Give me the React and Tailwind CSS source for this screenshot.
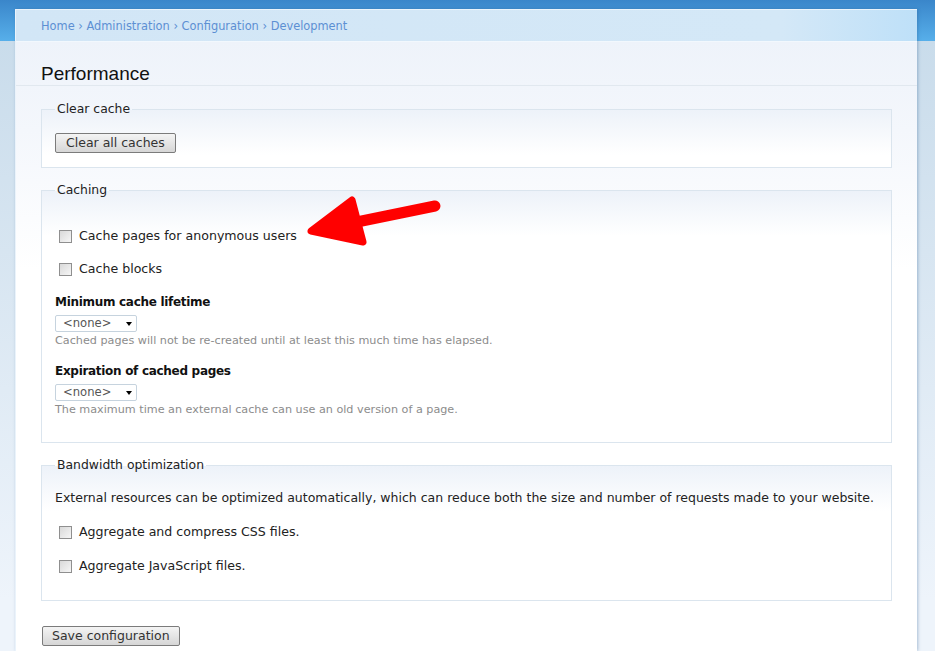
import React from 'react';

const font = { fontFamily: '"DejaVu Sans", Verdana, sans-serif' };

const Checkbox = ({ label }) => (
  <label className="flex items-center h-[16px] text-[12.6px] text-[#222] pl-[4px]">
    <span className="w-[13px] h-[13px] border border-[#8f8f8f] bg-[linear-gradient(135deg,#d9d9d9,#f6f6f6)] mr-[7px] shrink-0" />
    {label}
  </label>
);

const Select = () => (
  <div className="w-[82px] h-[17px] border border-[#c6d3de] bg-white flex items-center justify-between pl-[7px] pr-[4px] text-[11.6px] text-[#555] rounded-[2px]">
    <span>&lt;none&gt;</span>
    <span className="w-0 h-0 border-l-[3.5px] border-r-[3.5px] border-t-[4px] border-l-transparent border-r-transparent border-t-black mt-[1px]" />
  </div>
);

const Fieldset = ({ title, className, children }) => (
  <fieldset className={`border border-[#dbe5ee] bg-[linear-gradient(#edf2f9,#ffffff_45px)] px-[13px] ${className}`}>
    <legend className="px-[2px] text-[12.4px] leading-[16px] text-[#222]">{title}</legend>
    {children}
  </fieldset>
);

const Button = ({ children, className }) => (
  <button className={`h-[20px] border border-[#7b7b7b] rounded-[2px] bg-[linear-gradient(#f4f4f4,#d6d6d6)] text-[12.5px] text-[#333] leading-[16px] ${className}`}>
    {children}
  </button>
);

export default function App() {
  return (
    <div
      className="relative w-[935px] h-[651px] overflow-hidden bg-[linear-gradient(#3a86ca_0px,#57afea_41px,#c9dceb_41px,#eef4fb_600px)]"
      style={font}
    >
      <div className="ml-[15px] mr-[18px] mt-[9px] h-[642px] border-l border-t border-[#eaf3fb] shadow-[1px_0_3px_rgba(40,90,140,0.35)] bg-[linear-gradient(#eef3fa_32px,#f4f7fc_120px,#ffffff_260px)]">
        <div className="h-[32px] bg-[linear-gradient(90deg,#d2e6f6,#d4e8f7_85%,#bee0f8)] border-b border-[#f2f8fd] flex items-center pl-[25px] pt-[2px] text-[11.4px] text-[#5c8fd3]">
          Home › Administration › Configuration › Development
        </div>
        <div className="h-[44px] border-b border-[#e1e8ef] flex items-end pl-[25px]">
          <h1 className="text-[19px] text-[#111] leading-[24px] translate-y-[1px]" style={{ fontFamily: '"Liberation Sans", Arial, sans-serif' }}>Performance</h1>
        </div>
        <div className="pl-[25px] pr-[25px]">
          <Fieldset title="Clear cache" className="mt-[15px] pb-[13px]">
            <Button className="mt-[16px] px-[10px]">Clear all caches</Button>
          </Fieldset>

          <Fieldset title="Caching" className="mt-[14px] pb-[25px]">
            <div className="flex flex-col">
              <div className="mt-[30px]"><Checkbox label="Cache pages for anonymous users" /></div>
              <div className="mt-[17px]"><Checkbox label="Cache blocks" /></div>
              <div className="mt-[17px] h-[16px] leading-[16px] text-[12px] tracking-[-0.3px] font-bold text-[#111]">Minimum cache lifetime</div>
              <div className="mt-[5px]"><Select /></div>
              <div className="mt-[2px] h-[14px] leading-[14px] text-[11.2px] text-[#8c8c8c]">Cached pages will not be re-created until at least this much time has elapsed.</div>
              <div className="mt-[15px] h-[16px] leading-[16px] text-[12px] tracking-[-0.3px] font-bold text-[#111]">Expiration of cached pages</div>
              <div className="mt-[5px]"><Select /></div>
              <div className="mt-[2px] h-[14px] leading-[14px] text-[11.2px] text-[#8c8c8c]">The maximum time an external cache can use an old version of a page.</div>
            </div>
          </Fieldset>

          <Fieldset title="Bandwidth optimization" className="mt-[14px] pb-[26px]">
            <div className="flex flex-col">
              <div className="mt-[17px] h-[16px] leading-[16px] text-[12.5px] text-[#222] whitespace-nowrap">External resources can be optimized automatically, which can reduce both the size and number of requests made to your website.</div>
              <div className="mt-[18px]"><Checkbox label="Aggregate and compress CSS files." /></div>
              <div className="mt-[18px]"><Checkbox label="Aggregate JavaScript files." /></div>
            </div>
          </Fieldset>

          <Button className="mt-[25px] ml-[1px] px-[9px]">Save configuration</Button>
        </div>
      </div>

      <svg className="absolute left-[300px] top-[190px]" width="145" height="62" viewBox="0 0 145 62">
        <line x1="52" y1="33" x2="135" y2="16" stroke="#ff0000" strokeWidth="11" strokeLinecap="round" />
        <polygon points="11,41 52,10 63,52" fill="#ff0000" stroke="#ff0000" strokeWidth="7" strokeLinejoin="round" />
      </svg>
    </div>
  );
}
